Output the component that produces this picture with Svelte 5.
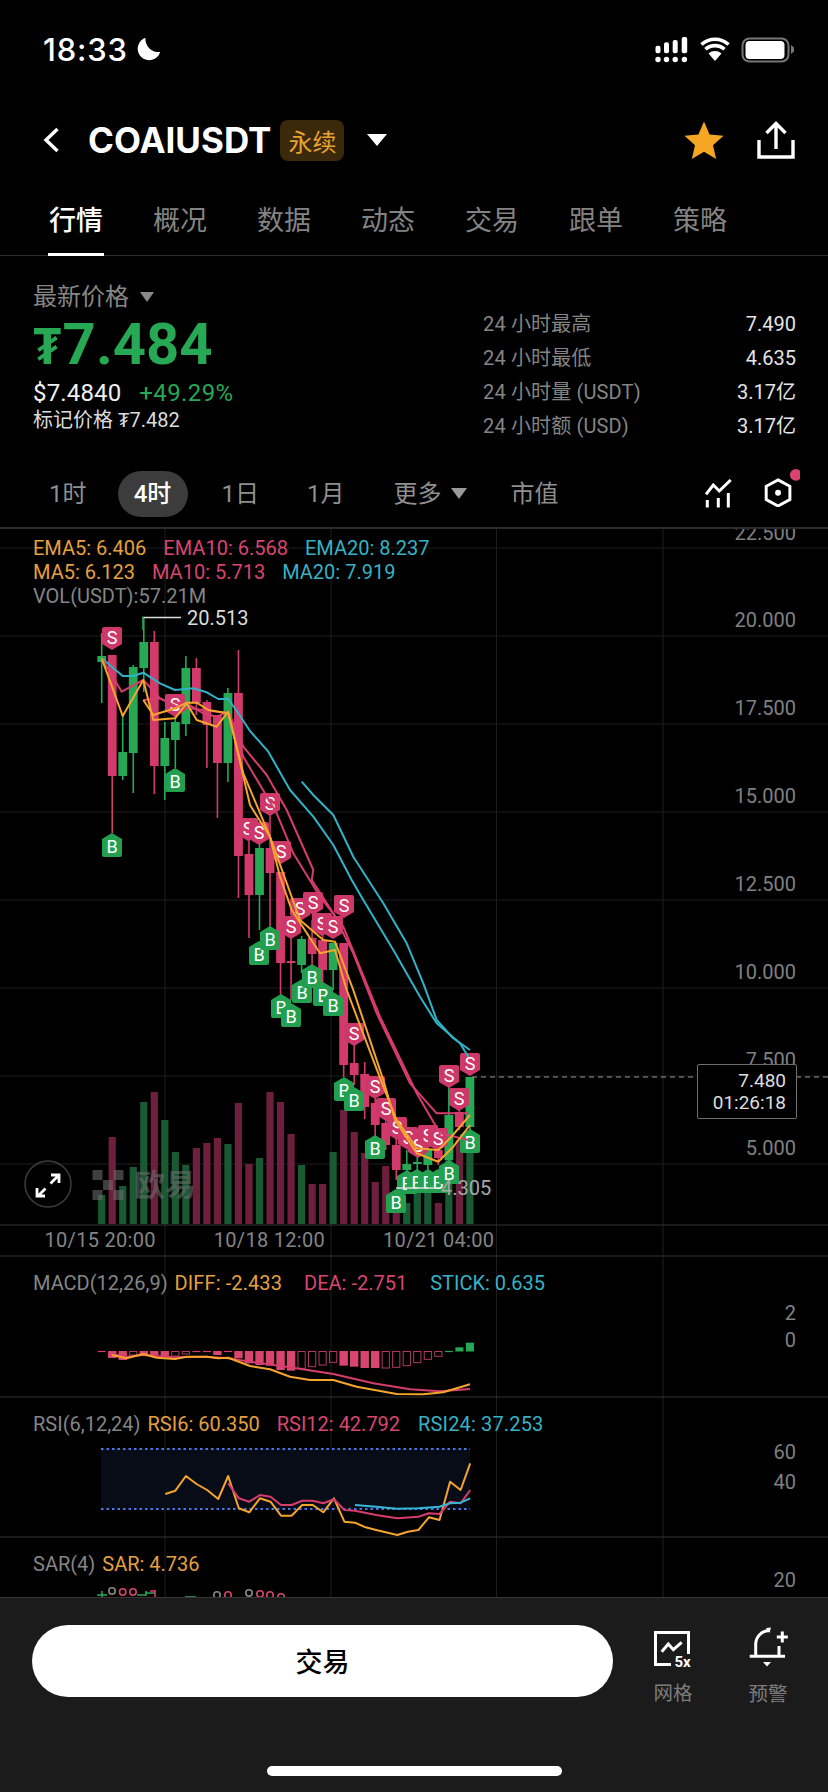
<script>
  const STEP = 10.52;
  const X0 = 101.7;
  const cx = (i) => X0 + STEP * i;
  const z3 = (a) => a.map(([x, y]) => [80 + x / 3, 600 + y / 3]);
  const z4 = (a) => a.map(([x, y]) => [220 + x / 3, 880 + y / 3]);
  const z5 = (a) => a.map(([x, y]) => [x / 1.893, 1220 + y / 3]);
  const z10 = (a) => a.map(([x, y]) => [90 + x / 3, 1330 + y / 3]);
  const pts = (a) => a.map(([x, y]) => `${x.toFixed(1)},${y.toFixed(1)}`).join(' ');

  const candles = [
    ['g',656,662,633,703],['r',655,776,655,833],['g',752,776,715,780],['g',667,753,665,793],
    ['g',642,668,618,692],['r',642,766,631,794],['g',738,766,722,800],['g',722,740,700,768],
    ['g',668,724,656,736],['r',668,703,658,715],['r',702,725,700,768],['r',715,763,715,818],
    ['g',693,763,688,782],['r',693,856,650,898],['r',854,895,830,938],['g',848,895,840,930],
    ['r',848,873,815,930],['r',872,963,872,997],['r',961,963,937,1000],['g',939,965,936,973],
    ['r',938,954,920,983],['r',940,970,925,985],['g',943,970,943,990],['r',943,1065,943,1077],
    ['r',1063,1075,1043,1085],['r',1074,1107,1062,1119],['r',1103,1125,1095,1137],['r',1123,1145,1115,1150],
    ['r',1145,1170,1130,1180],['g',1164,1170,1150,1175],['g',1162,1164,1152,1182],['g',1150,1165,1145,1175],
    ['r',1150,1158,1140,1165],['g',1115,1160,1087,1165],['r',1112,1127,1100,1130],['g',1077,1127,1077,1130]
  ];
  const vols = [1195,1137,1186,1167,1102,1092,1120,1152,1165,1148,1143,1138,1144,1103,1164,1158,1092,1102,1134,1165,1184,1184,1152,1110,1132,1153,1182,1166,1195,1203,1193,1190,1203,1147,1140,1147];

  const macd = [
    ['d',64],['f',84],['f',90],['o',75],['f',72],['f',75],['f',78],['o',78],['o',72],['d',64],['d',64],['f',75],
    ['d',64],['f',85],['f',100],['f',105],['f',107],['f',120],['f',122],['o',115],['o',110],['o',105],['o',97],
    ['f',107],['f',110],['f',114],['f',114],['o',114],['o',112],['o',107],['o',98],['o',88],['o',79],
    ['gd',64],['gf',52],['gf',38]
  ];

  const gridY = [548, 636, 724, 812, 900, 988, 1076, 1164];
  const gridX = [165, 331, 496.5, 663];
  const axis = [['22.500',533],['20.000',619.5],['17.500',708],['15.000',796],['12.500',884],['10.000',972],['7.500',1060],['5.000',1148]];

  const sells = [[112,637],[175,704],[270,803],[248,828],[259,832],[281,851],[300,908],[313,902],[344,905],[322,923],[291,926],[333,926],[354,1033],[375,1086],[386,1108],[397,1127],[408,1137],[418,1145],[428,1135],[438,1138],[449,1075],[459,1098],[470,1063]];
  const buys = [[112,846],[175,781],[259,954],[270,939],[281,1007],[291,1016],[302,992],[312,977],[323,995],[333,1005],[344,1090],[354,1100],[375,1148],[407,1183],[417,1182],[428,1182],[438,1182],[449,1173],[396,1202],[470,1142]];

  const cyan1 = pts([...z3([[65,175],[128,228],[160,228],[190,218],[240,250],[285,270],[340,265],[380,277],[415,297],[445,297],[475,340],[510,393],[565,455],[630,570],[700,650],[760,735]]), ...z4([[395,0],[430,60],[520,210],[600,350],[650,430],[720,490],[745,530]])]);
  const cyan2 = pts([...z3([[665,545],[700,585],[760,645],[820,770]]), ...z4([[445,0],[490,70],[560,190],[610,310],[650,420],[700,475],[750,510]])]);
  const pink1 = pts([...z3([[65,175],[125,275],[190,240],[240,295],[290,320],[320,310],[370,340],[410,350],[445,335],[490,440],[560,525],[620,630],[700,810]]), ...z4([[275,0],[340,100],[400,220],[470,400],[570,610],[650,700],[745,700]])]);
  const pink2 = pts([...z3([[190,300],[240,295],[290,320],[370,330],[445,340],[490,470],[590,640],[640,760],[720,890]]), ...z4([[370,140],[480,410],[590,640],[660,760],[745,780]])]);
  const orange1 = pts([...z3([[65,175],[128,348],[190,240],[220,360],[285,355],[320,310],[350,360],[410,380],[445,335],[510,615],[570,710],[600,830]]), ...z4([[215,90],[300,220],[345,210],[380,330],[490,620],[530,720],[590,805],[655,810],[690,775],[750,705]])]);
  const orange2 = pts([...z3([[190,300],[220,345],[285,325],[320,308],[350,308],[385,330],[445,340],[490,520],[570,710]]), ...z4([[240,120],[310,180],[345,185],[400,330],[490,600],[525,720],[590,820],[655,845],[700,800],[750,735]])]);

  const macdO = pts(z10([[65,75],[110,85],[160,72],[200,83],[255,87],[290,80],[350,80],[385,85],[415,83],[480,108],[540,118],[600,140],[660,150],[730,150],[800,170],[920,192],[1000,193],[1060,187],[1140,163]]));
  const macdP = pts(z10([[65,72],[110,80],[160,75],[250,82],[350,80],[415,85],[480,95],[600,112],[730,132],[850,160],[960,178],[1050,184],[1140,177]]));

  const rsiO = pts(z5([[313,822],[332,812],[352,768],[372,792],[392,810],[413,837],[432,768],[452,865],[472,877],[492,835],[512,845],[532,887],[552,887],[572,855],[592,855],[612,877],[632,835],[652,905],[672,908],[692,922],[712,930],[752,945],[772,935],[792,930],[812,892],[832,900],[852,785],[872,810],[890,730]]));
  const rsiP = pts(z5([[432,790],[452,835],[472,845],[492,825],[512,830],[532,855],[552,855],[572,842],[592,842],[612,850],[632,838],[652,870],[672,872],[712,885],[752,895],[792,890],[812,880],[832,882],[852,845],[872,850],[890,810]]));
  const rsiC = pts(z5([[672,855],[712,860],[752,866],[792,865],[832,860],[852,850],[872,848],[890,835]]));

  const sarDots = [[112,1591,'#888'],[122.7,1592,'#d8456f'],[133,1592,'#d8456f'],[217,1595,'#888'],[228,1595,'#d8456f'],[249,1593,'#888'],[260,1594,'#d8456f'],[270,1595,'#d8456f'],[281,1597,'#d8456f']];

  const tabs = ['行情', '概况', '数据', '动态', '交易', '跟单', '策略'];
  const stats = [['24 小时最高','7.490'],['24 小时最低','4.635'],['24 小时量 (USDT)','3.17亿'],['24 小时额 (USD)','3.17亿']];
</script>

<div class="app">
  <div class="status">
    <div class="time">18:33
      <svg class="moon" width="25" height="24" viewBox="0 0 25 24"><path d="M9.5 0.8 A11.5 11.5 0 1 0 24.2 15 A13 13 0 0 1 9.5 0.8Z" fill="#fff"/></svg>
    </div>
    <svg class="sysicons" width="141" height="27" viewBox="654 36 141 27">
      <g fill="#fff">
        <rect x="655.5" y="45.7" width="5" height="7.6" rx="2"/><rect x="664" y="42.3" width="5" height="11" rx="2"/><rect x="672.7" y="40" width="5" height="13.3" rx="2"/><rect x="681.7" y="37" width="5.5" height="16.3" rx="2"/>
        <circle cx="658" cy="59.5" r="2.7"/><circle cx="666.5" cy="59.5" r="2.7"/><circle cx="675.2" cy="59.5" r="2.7"/><circle cx="684.4" cy="59.5" r="2.7"/>
        <path d="M708.5 53.5 L715 61 L721.5 53.5 A10 10 0 0 0 708.5 53.5Z"/>
      </g>
      <g fill="none" stroke="#fff" stroke-width="3.6">
        <path d="M701.5 44.5 A20 20 0 0 1 728.5 44.5"/><path d="M705.5 49.3 A14 14 0 0 1 724.5 49.3"/>
      </g>
      <rect x="742.5" y="38.5" width="46" height="23" rx="7" fill="none" stroke="#777" stroke-width="2"/>
      <rect x="745.5" y="41" width="39" height="18" rx="4" fill="#fff"/>
      <path d="M791 45 L794 47.5 V51.5 L791 54Z" fill="#777"/>
    </svg>
  </div>

  <div class="header">
    <svg class="back" width="17" height="26" viewBox="0 0 17 26"><path d="M14.5 2 L3 13 L14.5 24" fill="none" stroke="#fff" stroke-width="3.4"/></svg>
    <span class="title">COAIUSDT</span>
    <span class="badge">永续</span>
    <span class="tri big"></span>
    <span class="spacer"></span>
    <svg class="star" width="40" height="39" viewBox="0 0 40 39"><path d="M20 0.5 L25.6 13.5 L39.5 14.8 L29 24.2 L32.2 38 L20 30.8 L7.8 38 L11 24.2 L0.5 14.8 L14.4 13.5Z" fill="#f5a623"/></svg>
    <svg class="share" width="38" height="38" viewBox="0 0 38 38"><path d="M2 19 V36 H36 V19 M19 28 V3 M9.5 12 L19 2.5 L28.5 12" fill="none" stroke="#fff" stroke-width="3.4"/></svg>
  </div>

  <div class="tabs">
    {#each tabs as t, i}
      <div class="tab" class:active={i === 0}>{t}</div>
    {/each}
  </div>

  <div class="price">
    <div class="pleft">
      <div class="plabel">最新价格<span class="tri small"></span></div>
      <div class="pmain"><span class="cur">₮</span>7.484</div>
      <div class="psub"><span class="usd">$7.4840</span><span class="pct">+49.29%</span></div>
      <div class="pmark">标记价格 ₮7.482</div>
    </div>
    <div class="pright">
      {#each stats as s}
        <div class="stat"><span class="k">{s[0]}</span><span class="v">{s[1]}</span></div>
      {/each}
    </div>
  </div>

  <div class="intervals">
    <span class="iv i1">1时</span>
    <span class="iv pill">4时</span>
    <span class="iv i2">1日</span>
    <span class="iv i3">1月</span>
    <span class="iv i4">更多<span class="tri small mid"></span></span>
    <span class="iv i5">市值</span>
    <span class="spacer"></span>
    <svg class="ico" width="28" height="29" viewBox="705 479 28 29"><path d="M706 494.3 L713.3 485 L719.3 491 L730.7 480 M707.3 500 V507.5 M718.3 498 V507.5 M728.3 493 V507.5" fill="none" stroke="#fff" stroke-width="3"/></svg>
    <svg class="hex" width="38" height="38" viewBox="762 470 38 38.5">
      <path d="M778 481 L790 487.5 V501 L778 507.5 L766 501 V487.5Z" fill="none" stroke="#fff" stroke-width="3"/>
      <circle cx="778" cy="494" r="3" fill="#fff"/>
      <circle cx="796" cy="476" r="6" fill="#d8446f"/>
    </svg>
  </div>

  <div class="chart">
    <svg class="canvas" width="828" height="1070" viewBox="0 527 828 1070">
      {#each gridY as y}<line x1="0" x2="828" y1={y} y2={y} class="grid"/>{/each}
      {#each gridX as x}<line x1={x} x2={x} y1="527" y2="1597" class="grid"/>{/each}
      <line x1="0" x2="828" y1="1225" y2="1225" class="sep"/>
      <line x1="0" x2="828" y1="1256" y2="1256" class="sep"/>
      <line x1="0" x2="828" y1="1397" y2="1397" class="sep"/>
      <line x1="0" x2="828" y1="1537" y2="1537" class="sep"/>

      {#each axis as a}<text x="796" y={a[1] + 7} class="ax" text-anchor="end">{a[0]}</text>{/each}

      {#each vols as top, i}
        <rect x={cx(i) - 3.6} y={top} width="7.2" height={1224 - top} fill={candles[i][0] === 'g' ? '#195a33' : '#6e1f3d'}/>
      {/each}

      <!-- watermark -->
      <g class="wmark">
        <rect x="92.5" y="1170" width="10" height="10"/><rect x="113.5" y="1170" width="10" height="10"/>
        <rect x="103" y="1180" width="10" height="10"/>
        <rect x="92.5" y="1190" width="10" height="10"/><rect x="113.5" y="1190" width="10" height="10"/>
        <text x="134" y="1196" class="wm">欧易</text>
      </g>

      <circle cx="48" cy="1184" r="23" fill="none" stroke="#3d3d3d" stroke-width="1.5"/>
      <path d="M51 1175 H59 V1183 M58.5 1175.5 L50.5 1183.5 M45.5 1188.5 L37.5 1196.5 M37 1188 V1196 H45" fill="none" stroke="#fff" stroke-width="2.8"/>

      {#each candles as c, i}
        <line x1={cx(i)} x2={cx(i)} y1={c[3]} y2={c[4]} stroke={c[0] === 'g' ? '#27a855' : '#d23a6c'} stroke-width="1.6"/>
        <rect x={cx(i) - 4.4} y={c[1]} width="8.8" height={c[2] - c[1]} fill={c[0] === 'g' ? '#27a855' : '#d23a6c'}/>
      {/each}

      {#each sells as m}
        <g transform="translate({m[0]},{m[1]})">
          <path d="M-8 -10 H8 a2 2 0 0 1 2 2 V7 L0 13 L-10 7 V-8 a2 2 0 0 1 2 -2Z" fill="#cd3869"/>
          <text x="0" y="6.5" class="mk" text-anchor="middle">S</text>
        </g>
      {/each}
      {#each buys as m}
        <g transform="translate({m[0]},{m[1]})">
          <path d="M0 -13 L10 -7 V9 a2 2 0 0 1 -2 2 H-8 a2 2 0 0 1 -2 -2 V-7Z" fill="#23a04f"/>
          <text x="0" y="6.5" class="mk" text-anchor="middle">B</text>
        </g>
      {/each}

      <polyline points={cyan1} class="ln" stroke="#2fb3c7"/>
      <polyline points={cyan2} class="ln" stroke="#2fb3c7"/>
      <polyline points={pink1} class="ln" stroke="#d63c6c"/>
      <polyline points={pink2} class="ln" stroke="#d63c6c"/>
      <polyline points={orange1} class="ln" stroke="#f5a52c"/>
      <polyline points={orange2} class="ln" stroke="#f5a52c"/>

      <line x1="142" x2="181" y1="617.5" y2="617.5" stroke="#ddd" stroke-width="1.6"/>
      <line x1="143" x2="143" y1="617" y2="630" stroke="#27a855" stroke-width="1.6"/>
      <text x="187" y="624.5" class="ext">20.513</text>
      <line x1="396" x2="437" y1="1188" y2="1188" stroke="#ddd" stroke-width="1.6"/>
      <text x="441" y="1195" class="ext dim">4.305</text>

      <line x1="472" x2="828" y1="1077" y2="1077" stroke="#9a9a9a" stroke-width="1" stroke-dasharray="5 4"/>

      <!-- MACD -->
      <text x="796" y="1320" class="ax" text-anchor="end">2</text>
      <text x="796" y="1347" class="ax" text-anchor="end">0</text>
      {#each macd as b, i}
        {@const x = cx(i)}
        {@const y = 1330 + b[1] / 3}
        {#if b[0] === 'd'}
          <line x1={x - 4} x2={x + 4} y1="1351.5" y2="1351.5" stroke="#d63c6c" stroke-width="1.2"/>
        {:else if b[0] === 'gd'}
          <line x1={x - 4} x2={x + 4} y1="1351.5" y2="1351.5" stroke="#27a855" stroke-width="1.2"/>
        {:else if b[0] === 'gf'}
          <rect x={x - 4} y={y} width="8" height={1351.5 - y} fill="#27a855"/>
        {:else if b[0] === 'f'}
          <rect x={x - 4.2} y="1351" width="8.4" height={y - 1351} fill="#d8456f"/>
        {:else}
          <rect x={x - 3.6} y="1351.5" width="7.2" height={y - 1351.5} fill="none" stroke="#b03a60" stroke-width="1"/>
        {/if}
      {/each}
      <polyline points={macdP} class="ln" stroke="#d63c6c"/>
      <polyline points={macdO} class="ln" stroke="#f5a52c"/>

      <!-- RSI -->
      <text x="796" y="1459" class="ax" text-anchor="end">60</text>
      <text x="796" y="1489" class="ax" text-anchor="end">40</text>
      <rect x="101" y="1449" width="369" height="60" fill="#080c16"/>
      <line x1="101" x2="470" y1="1449" y2="1449" class="dots"/>
      <line x1="101" x2="470" y1="1509" y2="1509" class="dots"/>
      <polyline points={rsiO} class="ln" stroke="#f5a52c"/>
      <polyline points={rsiP} class="ln" stroke="#d63c6c"/>
      <polyline points={rsiC} class="ln" stroke="#38b6d6"/>

      <!-- SAR -->
      <text x="796" y="1587" class="ax" text-anchor="end">20</text>
      <path d="M97 1595 H107 M102 1591 V1597 M137 1595 H146 V1591 M146 1593 H155" fill="none" stroke="#27a855" stroke-width="1.6"/>
      <path d="M150 1591 H155 M155 1590 V1597" fill="none" stroke="#d63c6c" stroke-width="1.6"/>
      <path d="M185 1597 H196" fill="none" stroke="#27a855" stroke-width="1.6"/>
      {#each sarDots as d}
        <circle cx={d[0]} cy={d[1]} r="3.2" fill="none" stroke={d[2]} stroke-width="1.6"/>
      {/each}
    </svg>

    <div class="tag"><span>7.480</span><span>01:26:18</span></div>

    <div class="legend main">
      <div class="lrow"><span class="o">EMA5: 6.406</span><span class="p">EMA10: 6.568</span><span class="c">EMA20: 8.237</span></div>
      <div class="lrow"><span class="o">MA5: 6.123</span><span class="p">MA10: 5.713</span><span class="c">MA20: 7.919</span></div>
      <div class="lrow"><span class="g">VOL(USDT):57.21M</span></div>
    </div>
    <div class="times"><span>10/15 20:00</span><span>10/18 12:00</span><span>10/21 04:00</span></div>
    <div class="legend macd">
      <div class="lrow tight"><span class="g">MACD(12,26,9)</span><span class="o l1">DIFF: -2.433</span><span class="p l2">DEA: -2.751</span><span class="c l3">STICK: 0.635</span></div>
    </div>
    <div class="legend rsi">
      <div class="lrow tight"><span class="g">RSI(6,12,24)</span><span class="o r1">RSI6: 60.350</span><span class="p r2">RSI12: 42.792</span><span class="c r3">RSI24: 37.253</span></div>
    </div>
    <div class="legend sar">
      <div class="lrow tight"><span class="g">SAR(4)</span><span class="o s1">SAR: 4.736</span></div>
    </div>
  </div>

  <div class="footer">
    <div class="trade">交易</div>
    <div class="tool t1">
      <svg width="40" height="38" viewBox="653 1630 40 38">
        <path d="M688.5 1655 V1633.5 H655.5 V1665.5 H671" fill="none" stroke="#fff" stroke-width="3"/>
        <path d="M661.7 1652.7 L668.3 1645 L673.3 1650.7 L681.7 1643.3" fill="none" stroke="#fff" stroke-width="3"/>
        <text x="674.5" y="1667.5" class="fivex">5x</text>
      </svg>
      <span>网格</span>
    </div>
    <div class="tool t2">
      <svg width="40" height="42" viewBox="749 1629 40 42">
        <path d="M756.7 1657 V1647 A14 14 0 0 1 770 1632.5 M780 1648 V1657 M750.7 1658.3 H786" fill="none" stroke="#fff" stroke-width="3"/>
        <path d="M767 1630 L772 1629.5 L770.5 1635Z" fill="#fff"/>
        <path d="M783.3 1633.5 V1644.5 M777.8 1639 H788.8" fill="none" stroke="#fff" stroke-width="3"/>
        <path d="M764 1664 H772 L768 1668.5Z" fill="#fff"/>
      </svg>
      <span>预警</span>
    </div>
    <div class="home"></div>
  </div>
</div>

<style>
  :global(body) { margin: 0; background: #000; }
  .app {
    position: relative; width: 828px; height: 1792px; overflow: hidden; background: #000; color: #fff;
    display: flex; flex-direction: column;
    font-family: Roboto, "Noto Sans CJK SC", sans-serif;
  }
  .spacer { flex: 1; }
  svg { display: block; flex: none; }

  .status { height: 98px; flex: none; display: flex; align-items: center; justify-content: space-between; padding: 0 33px 0 43px; box-sizing: border-box; }
  .time { display: flex; align-items: center; gap: 8px; font: 500 31px/1 Inter, sans-serif; letter-spacing: 0.8px; }

  .header { height: 84px; flex: none; display: flex; align-items: center; padding: 0 33px 0 43px; box-sizing: border-box; }
  .title { font: 700 35px/1 Inter, sans-serif; letter-spacing: 0; margin-left: 28px; }
  .badge { margin-left: 9px; width: 64px; height: 41px; border-radius: 8px; background: #3b290c; color: #e9a22f; font: 400 24px/41px "Noto Sans CJK SC", sans-serif; text-align: center; }
  .tri { display: inline-block; width: 0; height: 0; border-style: solid; border-color: transparent; }
  .tri.big { margin-left: 23px; border-width: 12px 10px 0 10px; border-top-color: #fff; }
  .tri.small { margin-left: 11px; border-width: 10px 7px 0 7px; border-top-color: #8a8a8a; vertical-align: 3px; }
  .tri.mid { margin-left: 9px; border-width: 11px 8px 0 8px; border-top-color: #9a9a9a; vertical-align: 3px; }
  .star { margin-right: -1px; }
  .share { margin-left: 34px; }

  .tabs { height: 74px; flex: none; display: flex; gap: 50px; padding: 0 0 0 49px; box-sizing: border-box; border-bottom: 1px solid #2b2b2b; }
  .tab { position: relative; width: 54px; height: 74px; font: 400 27px/74px "Noto Sans CJK SC", sans-serif; color: #838383; white-space: nowrap; }
  .tab.active { color: #fff; font-weight: 500; }
  .tab.active::after { content: ""; position: absolute; left: -1px; right: -1px; bottom: 0; height: 3px; background: #fff; }

  .price { height: 201px; flex: none; display: flex; justify-content: space-between; padding: 0 32px 0 33px; box-sizing: border-box; }
  .pleft { padding-top: 24px; }
  .plabel { font: 400 24px/30px "Noto Sans CJK SC", sans-serif; color: #868686; white-space: nowrap; }
  .pmain { margin-top: 5px; font: 700 58px/58px Roboto, "Noto Sans", "DejaVu Sans", sans-serif; color: #27a855; white-space: nowrap; }
  .cur { font-size: 50px; margin-right: 1px; }
  .psub { margin-top: 2px; display: flex; gap: 18px; font: 400 24px/30px Roboto, sans-serif; }
  .usd { color: #f0f0f0; letter-spacing: 0.15px; }
  .pct { color: #27a855; letter-spacing: 0.4px; }
  .pmark { font: 400 20px/24px Roboto, "Noto Sans", "Noto Sans CJK SC", sans-serif; color: #dcdcdc; }
  .pright { width: 313px; padding-top: 51px; }
  .stat { height: 34px; display: flex; justify-content: space-between; align-items: center; font: 400 20px/34px Roboto, "Noto Sans CJK SC", sans-serif; }
  .k { color: #858585; letter-spacing: 0.15px; }
  .v { color: #e4e4e4; }

  .intervals { height: 70px; flex: none; display: flex; align-items: center; padding: 4px 32px 0 49px; box-sizing: border-box; font: 400 24px/1 Roboto, "Noto Sans CJK SC", sans-serif; color: #8f8f8f; position: relative; }
  .iv { white-space: nowrap; }
  .pill { margin-left: 31px; width: 70px; height: 46px; border-radius: 23px; background: #3c3c3c; color: #fff; font-weight: 500; line-height: 46px; text-align: center; }
  .i2 { margin-left: 34px; }
  .i3 { margin-left: 48px; }
  .i4 { margin-left: 49px; }
  .i5 { margin-left: 44px; }
  .hex { margin-left: 29px; margin-top: -12px; margin-right: -4px; }
  .ico { margin-top: -1px; }

  .chart { position: relative; height: 1070px; flex: none; overflow: hidden; border-top: 2px solid #2b2b2b; box-sizing: border-box; }
  .canvas { position: absolute; left: 0; top: -2px; }
  .grid { stroke: #1e1e1e; stroke-width: 1; }
  .sep { stroke: #343434; stroke-width: 1.2; }
  .ax { font: 400 20px Roboto, sans-serif; fill: #808080; }
  .wmark { fill: #6a6a6a; opacity: 0.6; }
  .wm { font: 700 31px "Noto Sans CJK SC", sans-serif; }
  .mk { font: 400 18px Roboto, sans-serif; fill: #fff; }
  .ln { fill: none; stroke-width: 2; stroke-linejoin: round; }
  .ext { font: 400 20px Roboto, sans-serif; fill: #dcdcdc; }
  .ext.dim { fill: #a8a8a8; }
  .dots { stroke: #4a77e8; stroke-width: 2; stroke-dasharray: 2.5 3; }

  .tag { position: absolute; left: 697px; top: 535px; width: 100px; height: 55px; box-sizing: border-box; border: 1px solid #6f6f6f; background: #000; border-radius: 2px; padding: 5px 10px 0 0; display: flex; flex-direction: column; align-items: flex-end; font: 400 19px/22px Roboto, sans-serif; color: #dedede; }

  .legend { position: relative; padding-left: 33px; font: 400 20px/24px Roboto, sans-serif; white-space: nowrap; }
  .legend.main { height: 696px; padding-top: 7px; box-sizing: border-box; }
  .lrow { display: flex; gap: 17px; }
  .lrow.tight { gap: 0; }
  .o { color: #e5a03f; }
  .p { color: #d8456f; }
  .c { color: #36b2c4; }
  .g { color: #858585; }
  .legend.macd { height: 141px; padding-top: 15px; box-sizing: border-box; }
  .l1 { margin-left: 7px; letter-spacing: 0.1px; }
  .l2 { margin-left: 22px; }
  .l3 { margin-left: 23px; }
  .legend.rsi { height: 140px; padding-top: 15px; box-sizing: border-box; }
  .r1 { margin-left: 7px; }
  .r2 { margin-left: 17px; }
  .r3 { margin-left: 18px; letter-spacing: 0.15px; }
  .legend.sar { padding-top: 15px; }
  .s1 { margin-left: 7px; }
  .times { height: 31px; position: relative; display: flex; gap: 58px; padding-left: 44.5px; font: 400 20px/30px Roboto, sans-serif; color: #858585; letter-spacing: 0.3px; }

  .footer { position: relative; flex: 1; background: #1b1b1b; border-top: 1px solid #363636; box-sizing: border-box; display: flex; align-items: flex-start; padding: 27px 36px 0 32px; }
  .trade { flex: none; width: 581px; height: 72px; border-radius: 36px; background: #fff; color: #000; font: 500 27px/72px "Noto Sans CJK SC", sans-serif; text-align: center; }
  .tool { flex: none; display: flex; flex-direction: column; align-items: center; width: 40px; margin-top: 4px; font: 400 19.5px/26px "Noto Sans CJK SC", sans-serif; color: #7d7d7d; }
  .tool span { margin-top: 12px; white-space: nowrap; }
  .t1 { margin-left: 40px; }
  .t2 { margin-left: 55px; margin-top: 2px; }
  .t2 span { margin-top: 11px; }
  .fivex { font: 700 15px Roboto, sans-serif; fill: #fff; }
  .home { position: absolute; left: 267px; top: 168px; width: 295px; height: 10px; border-radius: 5px; background: #fff; }
</style>
